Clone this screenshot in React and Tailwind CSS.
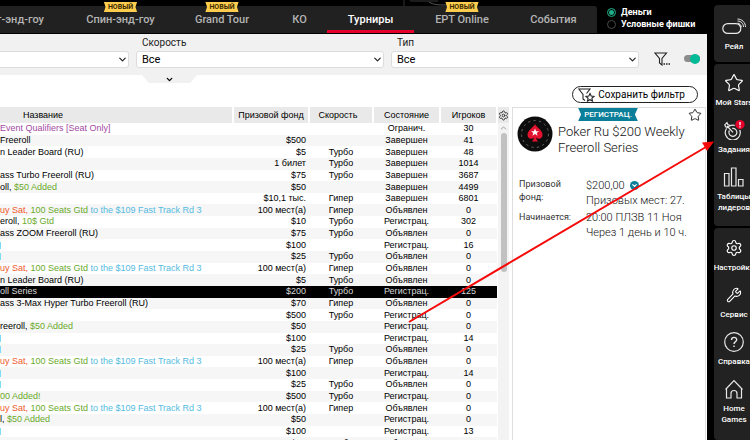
import React from "react";
import { Star, Wrench, ChevronDown, ChevronUp, Settings } from "lucide-react";

const tabs = [
  { label: "т-энд-гоу", size: "w-[69px] justify-end pr-[25px]" },
  { label: "Спин-энд-гоу", size: "w-[103px] justify-center", fresh: true },
  { label: "Grand Tour", size: "w-[100px] justify-center", fresh: true },
  { label: "КО", size: "w-[55px] justify-center" },
  { label: "Турниры", size: "w-[87px] justify-center", active: true },
  { label: "EPT Online", size: "w-[96px] justify-center", fresh: true },
  { label: "События", size: "w-[87px] justify-center" },
];

const PURPLE = "text-[#a349a4]";
const GREEN = "text-[#6aaa2a]";
const CYAN = "text-[#55bbe0]";
const RED = "text-[#f0582b]";

const satellite = [
  ["uy Sat, ", RED],
  ["100 Seats Gtd ", GREEN],
  ["to the $109 Fast Track Rd 3", CYAN],
];

const rows = [
  { name: [["Event Qualifiers [Seat Only]", PURPLE]], prize: "", speed: "", state: "Огранич.", players: 30 },
  { name: [["Freeroll", ""]], prize: "$500", speed: "", state: "Завершен", players: 41 },
  { name: [["n Leader Board (RU)", ""]], prize: "$5", speed: "Турбо", state: "Завершен", players: 48 },
  { name: [], prize: "1 билет", speed: "Турбо", state: "Завершен", players: 1014 },
  { name: [["ass Turbo Freeroll (RU)", ""]], prize: "$75", speed: "Турбо", state: "Завершен", players: 3687 },
  { name: [["oll, ", ""], ["$50 Added", GREEN]], prize: "$50", speed: "", state: "Завершен", players: 4499 },
  { name: [], prize: "$10,1 тыс.", speed: "Гипер", state: "Завершен", players: 6801 },
  { name: satellite, prize: "100 мест(а)", speed: "Гипер", state: "Объявлен", players: 0 },
  { name: [["eroll, ", ""], ["10$ Gtd", GREEN]], prize: "$10", speed: "Турбо", state: "Регистрац.", players: 302 },
  { name: [["ass ZOOM Freeroll (RU)", ""]], prize: "$75", speed: "Турбо", state: "Объявлен", players: 0 },
  { name: [], mark: true, prize: "$100", speed: "", state: "Регистрац.", players: 16 },
  { name: [], mark: true, prize: "$25", speed: "Турбо", state: "Объявлен", players: 0 },
  { name: satellite, prize: "100 мест(а)", speed: "Гипер", state: "Объявлен", players: 0 },
  { name: [["n Leader Board (RU)", ""]], prize: "$5", speed: "Турбо", state: "Объявлен", players: 0 },
  { name: [["oll Series", ""]], prize: "$200", speed: "Турбо", state: "Регистрац.", players: 125, selected: true },
  { name: [["ass 3-Max Hyper Turbo Freeroll (RU)", ""]], prize: "$70", speed: "Гипер", state: "Объявлен", players: 0 },
  { name: [], prize: "$500", speed: "Турбо", state: "Регистрац.", players: 0 },
  { name: [["reeroll, ", ""], ["$50 Added", GREEN]], prize: "$50", speed: "", state: "Регистрац.", players: 0 },
  { name: [], mark: true, prize: "$100", speed: "", state: "Регистрац.", players: 14 },
  { name: [], mark: true, prize: "$25", speed: "Турбо", state: "Объявлен", players: 0 },
  { name: satellite, prize: "100 мест(а)", speed: "Гипер", state: "Объявлен", players: 0 },
  { name: [], mark: true, prize: "$100", speed: "", state: "Регистрац.", players: 14 },
  { name: [], mark: true, prize: "$25", speed: "Турбо", state: "Объявлен", players: 0 },
  { name: [["00 Added!", GREEN]], prize: "$500", speed: "Турбо", state: "Регистрац.", players: 0 },
  { name: satellite, prize: "100 мест(а)", speed: "Гипер", state: "Объявлен", players: 0 },
  { name: [["l, ", ""], ["$50 Added", GREEN]], prize: "$50", speed: "", state: "Регистрац.", players: 0 },
  { name: [], mark: true, prize: "$100", speed: "", state: "Регистрац.", players: 13 },
  { name: [], mark: true, prize: "$25", speed: "Турбо", state: "Объявлен", players: 0 },
];

function Tab({ label, size, active, fresh }) {
  return (
    <button
      type="button"
      className={`relative flex h-full shrink-0 items-center border-b-[3px] pt-1 text-[11px] leading-4 font-medium whitespace-nowrap ${size} ${
        active ? "border-[#e4002b] text-white" : "border-transparent text-[#b4b4b4]"
      }`}
    >
      {label}
      {fresh && (
        <span className="absolute inset-x-0 -top-1 flex justify-center">
          <span className="bg-[#ffcd4d] px-1 text-[7px] leading-[10px] font-bold text-[#3a2b00] [clip-path:polygon(0_0,100%_0,95%_50%,100%_100%,0_100%,5%_50%)]">
            НОВЫЙ
          </span>
        </span>
      )}
    </button>
  );
}

function Mode({ label, checked }) {
  return (
    <label className="flex h-3 items-center gap-[5px] text-[9px] leading-3 font-bold whitespace-nowrap text-white">
      <input
        type="radio"
        name="mode"
        defaultChecked={checked}
        className="h-[9px] w-[9px] appearance-none rounded-full border border-[#4a4a4a] checked:border-[#1d8f72] checked:bg-[#1fae88] checked:shadow-[inset_0_0_0_1px_#000]"
      />
      {label}
    </label>
  );
}

function Filter({ id, label, value, first }) {
  return (
    <div className="flex min-w-0 flex-col text-[#222]">
      <label htmlFor={id} className="h-3 px-[6px] text-[10px] leading-3">
        {label}
      </label>
      <div className="relative mt-0.5">
        <select
          id={id}
          aria-label={label || "Фильтр"}
          className={`block h-[17px] w-full appearance-none border border-[#dcdcdc] bg-white px-[5px] text-[11px] leading-[15px] text-black ${
            first ? "rounded-r-[3px] border-l-0" : "rounded-[3px]"
          }`}
        >
          <option>{value}</option>
        </select>
        <ChevronDown className="pointer-events-none absolute top-[3px] right-px h-[11px] w-[11px]" strokeWidth={2.6} />
      </div>
    </div>
  );
}

function Table() {
  const head = "border-r-2 border-white p-0 font-normal whitespace-nowrap";
  return (
    <table className="h-[342px] w-full table-fixed border-collapse text-[9px] leading-[11px] text-black">
      <colgroup>
        <col />
        <col className="w-[76px]" />
        <col className="w-[64px]" />
        <col className="w-[67px]" />
        <col className="w-[57px]" />
      </colgroup>
      <thead>
        <tr className="h-4 bg-[#e9e9e9]">
          <th className={`${head} pr-[146px] text-center`}>Название</th>
          <th className={`${head} text-center`}>Призовой фонд</th>
          <th className={`${head} pr-[6px]`}>Скорость</th>
          <th className={head}>Состояние</th>
          <th className={head}>Игроков</th>
        </tr>
      </thead>
      <tbody>
        {rows.map((row, i) => (
          <tr
            key={i}
            className={row.selected ? "bg-black text-[#d8d8d8]" : i % 2 ? "bg-[#f6f6f6]" : "bg-white"}
          >
            <td className="overflow-hidden p-0 whitespace-pre">
              {row.mark && <span className="block h-[7px] w-px bg-[#7fdcf5]" />}
              {row.name.map(([text, color], k) => (
                <span key={k} className={color}>
                  {text}
                </span>
              ))}
            </td>
            <td className="p-0 pr-[3px] text-right whitespace-nowrap">{row.prize}</td>
            <td className="p-0 text-center">{row.speed}</td>
            <td className="p-0 text-center">{row.state}</td>
            <td className="p-0 text-center">{row.players}</td>
          </tr>
        ))}
      </tbody>
    </table>
  );
}

function Logo() {
  return (
    <svg viewBox="0 0 36 36" className="h-9 w-9 shrink-0" aria-hidden="true">
      <circle cx="18" cy="18" r="17.5" fill="#0d0d0d" />
      <circle cx="18" cy="18" r="13.5" fill="none" stroke="#6e6e6e" strokeWidth="0.9" strokeDasharray="2.400 3.200" />
      <path
        d="M18 8c1 3 7.500 6 7.500 10.800c0 4.200-4.400 5-6.400 2.700c.2 1.900.9 3.100 2.200 4h-6.600c1.300-.9 2-2.100 2.200-4c-2 2.300-6.400 1.500-6.400-2.700C10.500 14 17 11 18 8z"
        fill="#e3122f"
      />
      <path d="M18 12.500l1.100 2.700h2.900l-2.300 1.800.9 2.800-2.600-1.700-2.600 1.700.9-2.800-2.300-1.800h2.900z" fill="#fff" />
    </svg>
  );
}

function Details() {
  return (
    <section className="min-w-0 flex-1 border border-b-0 border-[#dedede] bg-white px-1 text-[#111]">
      <div className="relative flex h-[13px] justify-center">
        <span className="mr-[2px] bg-[#0b7f99] px-[6px] text-[8px] leading-[13px] font-medium text-white [clip-path:polygon(0_0,100%_0,95%_50%,100%_100%,0_100%,5%_50%)]">
          РЕГИСТРАЦ.
        </span>
        <button type="button" aria-label="В избранное" className="absolute top-0 -right-px">
          <Star className="h-[14px] w-[14px]" strokeWidth={1.5} />
        </button>
      </div>
      <div className="-mt-[5px] flex gap-[5px]">
        <Logo />
        <h2 className="pt-2 text-[13px] leading-4 font-light">
          Poker Ru $200 Weekly
          <br />
          Freeroll Series
        </h2>
      </div>
      <dl className="mt-[22px] grid grid-cols-[67px_1fr] gap-y-0.5 pl-[2px] text-[11px] leading-[15px] font-light">
        <dt className="text-[9px] leading-[13px] font-normal text-[#333]">
          Призовой
          <br />
          фонд:
        </dt>
        <dd>
          <span className="flex items-center gap-[5px]">
            $200,00
            <button type="button" aria-label="Подробнее" className="rounded-full bg-[#0b7f99] p-px text-white">
              <ChevronDown className="h-[7px] w-[7px]" strokeWidth={4} />
            </button>
          </span>
          Призовых мест: 27.
        </dd>
        <dt className="text-[9px] leading-[15px] font-normal text-[#333]">Начинается:</dt>
        <dd className="whitespace-nowrap">
          20:00 ПЛЗВ 11 Ноя
          <br />
          Через 1 день и 10 ч.
        </dd>
      </dl>
    </section>
  );
}

const iconProps = {
  viewBox: "0 0 24 20",
  className: "h-5 w-6",
  fill: "none",
  stroke: "#e8e8e8",
  strokeWidth: 1.2,
  "aria-hidden": true,
};

function RailIcon() {
  return (
    <svg {...iconProps}>
      <rect x="0.800" y="6.600" width="18" height="9.800" rx="4.900" />
      <path d="M15.500 6.200c2 0 3.800 1.800 3.800 4M15.500 4c3.500 0 6 2.600 6 6M15.500 2c4.500 0 8 3.500 8 8" strokeWidth="1" />
    </svg>
  );
}

function TasksIcon() {
  return (
    <svg {...iconProps}>
      <path d="M7.500 5.900A7.500 7.500 0 1 1 4.600 8.400" />
      <path d="M10.200 8.400A4 4 0 1 1 7.400 10.400" />
      <path d="M11 12.300L5 6M2.800 4.800L5 2.600l.8 2 2 .8L5.600 7.600l-2-.8z" />
      <circle cx="18" cy="4.600" r="5.400" fill="#222" stroke="none" />
      <circle cx="18" cy="4.600" r="4.600" fill="#e4002b" stroke="none" />
      <path d="M18 2v3.200M18 6.200v1.200" stroke="#fff" strokeWidth="1.400" />
    </svg>
  );
}

function LeadersIcon() {
  return (
    <svg {...iconProps}>
      <path d="M2.500 6.500h4.500v12.500H2.500zM9.500 1h4.500v18H9.500zM16.500 12.500H21v6.500h-4.500z" />
    </svg>
  );
}

function HelpIcon() {
  return (
    <svg {...iconProps}>
      <circle cx="12" cy="10" r="9.300" />
      <path d="M9.500 8c0-3.600 5.200-3.400 5.200-.3 0 2-2.700 2.200-2.700 4.300M12 13.400v1.500" strokeWidth="1.400" />
    </svg>
  );
}

function HomeIcon() {
  return (
    <svg {...iconProps}>
      <path d="M3.500 10.500L12 1.500l8.500 9M4.500 9.500V19H9v-4.500c0-4 6-4 6 0V19h4.500V9.500" />
    </svg>
  );
}

const navGroups = [
  { box: "pt-3 pb-[10px]", items: [{ label: "Рейл", icon: <RailIcon /> }] },
  {
    box: "pt-[9px] pb-[13px]",
    items: [
      { label: "Мой Stars", icon: <Star className="h-5 w-5" strokeWidth={1.4} /> },
      { label: "Задания", icon: <TasksIcon /> },
      { label: "Таблицы\nлидеров", icon: <LeadersIcon /> },
    ],
  },
  {
    box: "grow pt-[10px]",
    items: [
      { label: "Настройки", icon: <Settings className="h-[18px] w-[18px]" strokeWidth={1.5} /> },
      { label: "Сервис", icon: <Wrench className="h-4 w-4" strokeWidth={1.6} /> },
      { label: "Справка", icon: <HelpIcon /> },
      { label: "Home\nGames", icon: <HomeIcon /> },
    ],
  },
];

function Sidebar() {
  return (
    <nav className="ml-[7px] w-9 shrink-0 overflow-hidden pt-[5px]">
      <div className="flex h-full w-10 flex-col gap-[2px]">
        {navGroups.map((group, i) => (
          <div key={i} className={`flex flex-col items-center gap-3 rounded-l-[4px] bg-[#222] ${group.box}`}>
            {group.items.map((item) => (
              <button
                key={item.label}
                type="button"
                className="flex w-10 flex-col items-center gap-1 text-[8px] leading-[11px] font-medium whitespace-pre text-white"
              >
                <span className="flex h-5 items-center">{item.icon}</span>
                <span>{item.label}</span>
              </button>
            ))}
          </div>
        ))}
      </div>
    </nav>
  );
}

export default function App() {
  return (
    <div className="relative flex h-screen overflow-hidden bg-black font-['Roboto',sans-serif]">
      <main className="flex min-w-0 flex-1 flex-col">
        <header className="flex h-[34px] shrink-0 pb-px">
          <div className="relative flex w-[597px] shrink-0 pt-[6px]">
            <svg viewBox="0 0 60 6" className="absolute top-0 left-[403px] h-[6px] w-[60px]" aria-hidden="true">
              <path d="M1 0v6" stroke="#333" strokeWidth="1" />
              <path d="M6 0h29v2H8z" fill="#1c1c1c" />
              <path d="M26 2c5 3 9 3 20 3" stroke="#555" strokeWidth="1" fill="none" />
            </svg>
            <div className="flex h-[27px] w-full rounded-tr-[3px] bg-[#212121]">
              {tabs.map((tab) => (
                <Tab key={tab.label} {...tab} />
              ))}
            </div>
          </div>
          <div className="flex flex-col pt-[6px] pl-[10px]">
            <Mode label="Деньги" checked />
            <Mode label="Условные фишки" />
          </div>
        </header>

        <div className="flex min-h-0 flex-1 flex-col overflow-hidden bg-white">
          <div className="grid h-[41px] shrink-0 grid-cols-[129px_1fr_1fr_61px] gap-x-[7px] bg-[#f1f1f1] pt-[3px]">
            <Filter id="kind" label="" value="" first />
            <Filter id="speed" label="Скорость" value="Все" />
            <Filter id="type" label="Тип" value="Все" />
            <div className="mt-[13px] flex h-[17px] items-center gap-[13px] self-start pl-2">
              <button type="button" aria-label="Фильтры">
                <svg viewBox="0 0 17 14" className="h-[14px] w-[17px]" fill="none" stroke="#222" strokeWidth="1.100">
                  <path d="M1 1h11.500L8 6.500V13L5.500 11V6.500z" />
                  <path d="M9.500 12h1.500M12 12h1.500M14.500 12H16" strokeWidth="1.500" />
                </svg>
              </button>
              <label className="relative flex h-[10px] w-4 items-center">
                <input
                  type="checkbox"
                  defaultChecked
                  aria-label="Включить фильтр"
                  className="h-[7px] w-4 appearance-none rounded-full bg-[#8c8c8c]"
                />
                <span className="pointer-events-none absolute right-0 h-[10px] w-[10px] rounded-full bg-[#00b997]" />
              </label>
            </div>
          </div>

          <div className="flex h-8 shrink-0 items-start justify-between pr-[9px] pl-[142px]">
            <button
              type="button"
              aria-label="Развернуть"
              className="flex h-2 w-[55px] items-center justify-center bg-[#f1f1f1] [clip-path:polygon(0_0,100%_0,88%_100%,12%_100%)]"
            >
              <ChevronDown className="h-[9px] w-[9px]" strokeWidth={3.4} />
            </button>
            <button
              type="button"
              className="mt-[11px] flex h-[17px] items-center gap-[3px] rounded-full border border-[#222] pr-[12px] pl-[5px] text-[10px] leading-[15px] text-black"
            >
              <svg viewBox="0 0 17 14" className="h-[14px] w-[17px]" fill="none" stroke="#222" strokeWidth="1.100">
                <path d="M7 12.500L5 11V6.500L.8 1H12L8.500 5.500" />
                <path d="M12 5.500l1.200 2.600 2.800.3-2.100 1.900.6 2.800-2.500-1.400-2.500 1.400.6-2.800L8 8.400l2.800-.3z" />
              </svg>
              Сохранить фильтр
            </button>
          </div>

          <div className="flex min-h-0 flex-1 items-stretch pr-px">
            <div className="h-full w-[498px] shrink-0 overflow-hidden font-['Liberation_Sans',sans-serif]">
              <Table />
            </div>
            <div className="mr-[3px] flex w-[11px] shrink-0 flex-col">
              <button
                type="button"
                aria-label="Столбцы"
                className="flex h-4 shrink-0 items-center justify-center bg-[#e9e9e9] text-[#333]"
              >
                <Settings className="h-[11px] w-[11px]" strokeWidth={2} />
              </button>
              <div className="flex flex-1 flex-col items-center bg-[#f3f3f3] text-[#999]">
                <ChevronUp className="h-[10px] w-[9px]" strokeWidth={2.5} />
                <div className="h-[139px] w-[6px] rounded-full bg-[#c1c1c1]" />
              </div>
            </div>
            <Details />
          </div>
        </div>
      </main>

      <Sidebar />

      <svg
        viewBox="0 0 310 185"
        className="pointer-events-none absolute top-[140px] left-[407px] h-[185px] w-[310px]"
        aria-hidden="true"
      >
        <path d="M2 182L299 7" stroke="#f50a0a" strokeWidth="2" />
        <path d="M307 1.500L300 11l-5-8.500z" fill="#f50a0a" />
      </svg>
    </div>
  );
}
